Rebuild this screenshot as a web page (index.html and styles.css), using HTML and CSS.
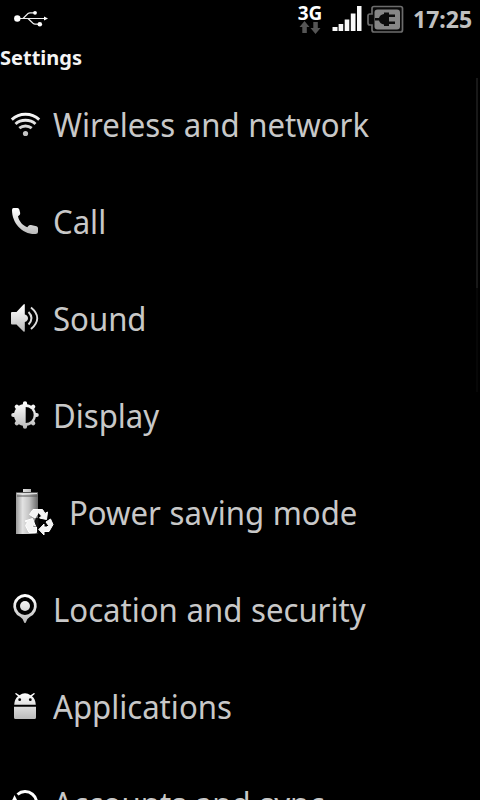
FILE: index.html
```
<!DOCTYPE html>
<html lang="en">
<head>
<meta charset="utf-8">
<title>Settings</title>
<link rel="stylesheet" href="styles.css">
</head>
<body>
<svg class="defs" width="0" height="0" aria-hidden="true">
  <defs>
    <linearGradient id="g" gradientUnits="userSpaceOnUse" x1="0" y1="3" x2="0" y2="29"><stop offset="0" stop-color="#fff"/><stop offset="1" stop-color="#b8b8b8"/></linearGradient>
    <linearGradient id="bat" x1="0" y1="0" x2="1" y2="0"><stop offset="0" stop-color="#999"/><stop offset=".3" stop-color="#e2e2e2"/><stop offset=".6" stop-color="#c4c4c4"/><stop offset="1" stop-color="#686868"/></linearGradient>
  </defs>
</svg>
<header class="status">
  <svg class="usb" width="36" height="20" viewBox="0 0 36 20" fill="none" stroke="#eee" stroke-width="1.2">
    <path d="M4 9.500H32M10 9.500L15 4.500Q16 3.800 17 3.800H21M15 9.500L20 14.300Q21 15.200 22 15.200H25"/>
    <g fill="#fff" stroke="none"><circle cx="4.300" cy="9.500" r="3.200"/><circle cx="22" cy="3.800" r="1.900"/><circle cx="26.800" cy="15.200" r="2.300"/><path d="M31 7.500L35 9.500 31 11.500z"/></g>
  </svg>
  <div class="net">
    <span class="net-label">3G</span>
    <svg width="22" height="14" viewBox="0 0 22 14" fill="#555"><path d="M5.500 0L10.500 6H7.800V12H3.300V6H.5zM16.500 13L11.500 7H14.300V1H18.800V7H21.500z"/></svg>
  </div>
  <svg class="signal" width="31" height="28" viewBox="0 0 31 28" fill="#f8f8f8"><path d="M.5 22h5v4h-5zM6.600 19h4.600v7H6.600zM12.700 14.500h4.600V26h-4.600zM18.800 8.500h4.700V26h-4.700zM25 1h4.500v25H25z"/></svg>
  <svg class="battery" width="38" height="29" viewBox="0 0 38 29">
    <path d="M7 1.500H33.500Q35.500 1.500 35.500 3.500V25Q35.500 27 33.500 27H7Q5 27 5 25V20H3Q1 20 1 18V11Q1 9 3 9H5V3.500Q5 1.500 7 1.500z" fill="#090909" stroke="#6c6c6c" stroke-width="1.700"/>
    <rect x="7.500" y="4.500" width="25.500" height="20" rx="3" fill="#868686"/>
    <path d="M8 13H12Q13 9.500 17 9V7.500H22V21H17V19.500Q13 19 12 15.500H8zM22 9.500h6v2.500h-6zM22 16.500h6V19h-6z" fill="#0b0b0b"/>
  </svg>
  <time class="clock">17:25</time>
</header>
<h1 class="title">Settings</h1>
<main class="list">
  <div class="row"><svg class="icon" viewBox="0 0 32 32" fill="none" stroke="url(#g)" stroke-width="2.900"><path d="M2.800 10.600Q8.500 5.200 16.500 5.200T30.200 10.600M6.500 15Q10.500 11.300 16.500 11.300T26.500 15M10.300 19.200Q13 17 16.500 17T22.700 19.200"/><circle cx="16.500" cy="24.500" r="2.600" fill="url(#g)" stroke="none"/></svg><span class="label">Wireless and network</span></div>
  <div class="row"><svg class="icon" viewBox="0 0 32 32" fill="url(#g)"><path d="M4.500 2H8.500Q10 2 10.300 3.500L11.200 7Q11.400 8.500 10 9.500L9 10.300C10 15.500 14 19.800 18.300 21.200L19.300 20Q20.500 18.500 22 19L27.500 20.300Q29 20.700 29 22.300V26Q29 28 26.500 28C13 28.500 3 17 3 4Q3 2 4.500 2z"/></svg><span class="label">Call</span></div>
  <div class="row"><svg class="icon" viewBox="0 0 32 32" fill="url(#g)"><path d="M3 9H7.500L14.500 1.500Q15.800 .5 15.800 2V11.500Q19 12.500 19 15.200T15.800 19V27.500Q15.800 29.500 14.500 28.500L7.500 21.500H3Q2 21.500 2 20.500V10Q2 9 3 9z"/><path d="M19.500 9Q25.500 15 19.500 21.500M22 4.500Q34.500 15 22 26" fill="none" stroke="#ddd" stroke-width="1.900"/></svg><span class="label">Sound</span></div>
  <div class="row"><svg class="icon" viewBox="0 0 32 32" fill="url(#g)"><circle cx="16" cy="15" r="11"/><g fill="none" stroke="url(#g)" stroke-width="4.200" stroke-linecap="round"><path d="M16.010 3.300L16 26.700M4.300 15L10 15.010M22 15L27.700 15.010M7.800 6.800L10 9M24.200 6.800L22 9M7.800 23.200L10 21M24.200 23.200L22 21"/></g><path d="M16.700 7A8 8 0 0 1 16.700 23z" fill="#050505"/></svg><span class="label">Display</span></div>
  <div class="row"><svg class="icon icon-large" viewBox="0 0 48 48"><path d="M14 0H22V3H29V45H7V3H14z" fill="url(#bat)"/><path d="M7 3.500H29M8 7H28.500" stroke="#555" stroke-width="1"/><path d="M8 4.500H28" stroke="#ddd" stroke-width="1"/>
    <path d="M29.500 45V29L27 29 24 36 26 44z" fill="#111"/>
    <g fill="#f4f4f4" stroke="#fff" stroke-width="1" stroke-linejoin="round"><path d="M20.500 25.500L24 20.500H33.500L36 24.500 38.500 23 37.500 30.500 30.500 29 32.500 27 29.500 23.500 26 29z"/><path d="M37 33L41.500 30 44 35.500 40 42.500H35V46L29.800 40.500 35 35V38H38L39.500 36.500z"/><path d="M16 32L23.500 29.500 26.500 37 24 36 23.500 38H27.500V43.500H20L16.500 36.500 18.500 33.500z"/></g></svg><span class="label">Power saving mode</span></div>
  <div class="row"><svg class="icon" viewBox="0 0 32 32" fill="url(#g)"><path fill-rule="evenodd" d="M16 0A12 12 0 0 1 21 22.800Q18.500 24 16.800 28.500Q16 29.700 15.200 28.500Q13.500 24 11 22.800A12 12 0 0 1 16 0zM16 3A9 9 0 1 0 16 21A9 9 0 1 0 16 3z"/><circle cx="16" cy="12" r="5"/></svg><span class="label">Location and security</span></div>
  <div class="row"><svg class="icon" viewBox="0 0 32 32" fill="url(#g)"><path d="M5.200 13.800Q5.500 8 9 5.200L6 2.800 7 1.900 10.500 4.300Q13 2.200 16 2.200T21.500 4.300L25 1.900 26 2.800 23 5.200Q26.500 8 26.800 13.800zM5 15.800H27V26.500Q27 28 25.500 28H6.500Q5 28 5 26.500z"/><g fill="#050505"><circle cx="10.700" cy="8.700" r="1.400"/><circle cx="21.300" cy="8.700" r="1.400"/></g></svg><span class="label">Applications</span></div>
  <div class="row"><svg class="icon" viewBox="0 0 32 32" fill="none" stroke="#fff" stroke-width="3"><path d="M8.500 6.500A11.500 11.500 0 0 1 26 21M22 25A11.500 11.500 0 0 1 5.500 11"/><path d="M5.500 7L2.500 14H9z" fill="#fff" stroke="none"/></svg><span class="label">Accounts and sync</span></div>
</main>
<div class="scrollbar"><div class="thumb"></div></div>
</body>
</html>
```
FILE: styles.css
```
* { box-sizing: border-box; }
html, body { height: 100%; }
body {
  margin: 0;
  position: relative;
  overflow: hidden;
  background: #000;
  color: #c8c8c8;
  font-family: "Noto Sans", "Open Sans", sans-serif;
}
.defs { position: absolute; }
svg { display: block; flex: none; }
.status {
  height: 38px;
  display: flex;
  align-items: center;
  padding: 0 8px 0 13px;
}
.usb { margin-right: auto; }
.net {
  width: 26px;
  height: 34px;
  display: flex;
  flex-direction: column;
  align-items: center;
  margin-right: 9px;
}
.net-label {
  height: 19px;
  color: #fff;
  font-size: 19px;
  line-height: 22px;
  font-weight: 700;
}
.signal { margin-right: 4px; }
.battery { margin-right: 8px; }
.clock {
  width: 59px;
  color: #c0c0c0;
  font-size: 23px;
  line-height: 38px;
  font-weight: 700;
  white-space: nowrap;
}
.title {
  margin: 0;
  height: 38px;
  color: #f4f4f4;
  font-size: 20px;
  line-height: 39px;
  font-weight: 700;
}
.list {
  height: 724px;
  overflow: hidden;
}
.row {
  height: 97px;
  display: flex;
  align-items: center;
  gap: 12px;
  padding-left: 9px;
}
.icon { width: 32px; height: 32px; }
.icon-large { width: 48px; height: 48px; }
.label {
  font-size: 33px;
  line-height: 44px;
  word-spacing: .6px;
  white-space: nowrap;
  transform: scaleX(.943);
  transform-origin: left center;
}
.scrollbar {
  position: absolute;
  top: 78px;
  right: 2px;
  width: 2px;
  height: 314px;
  background: #070707;
}
.thumb { height: 210px; background: #181818; }
```
